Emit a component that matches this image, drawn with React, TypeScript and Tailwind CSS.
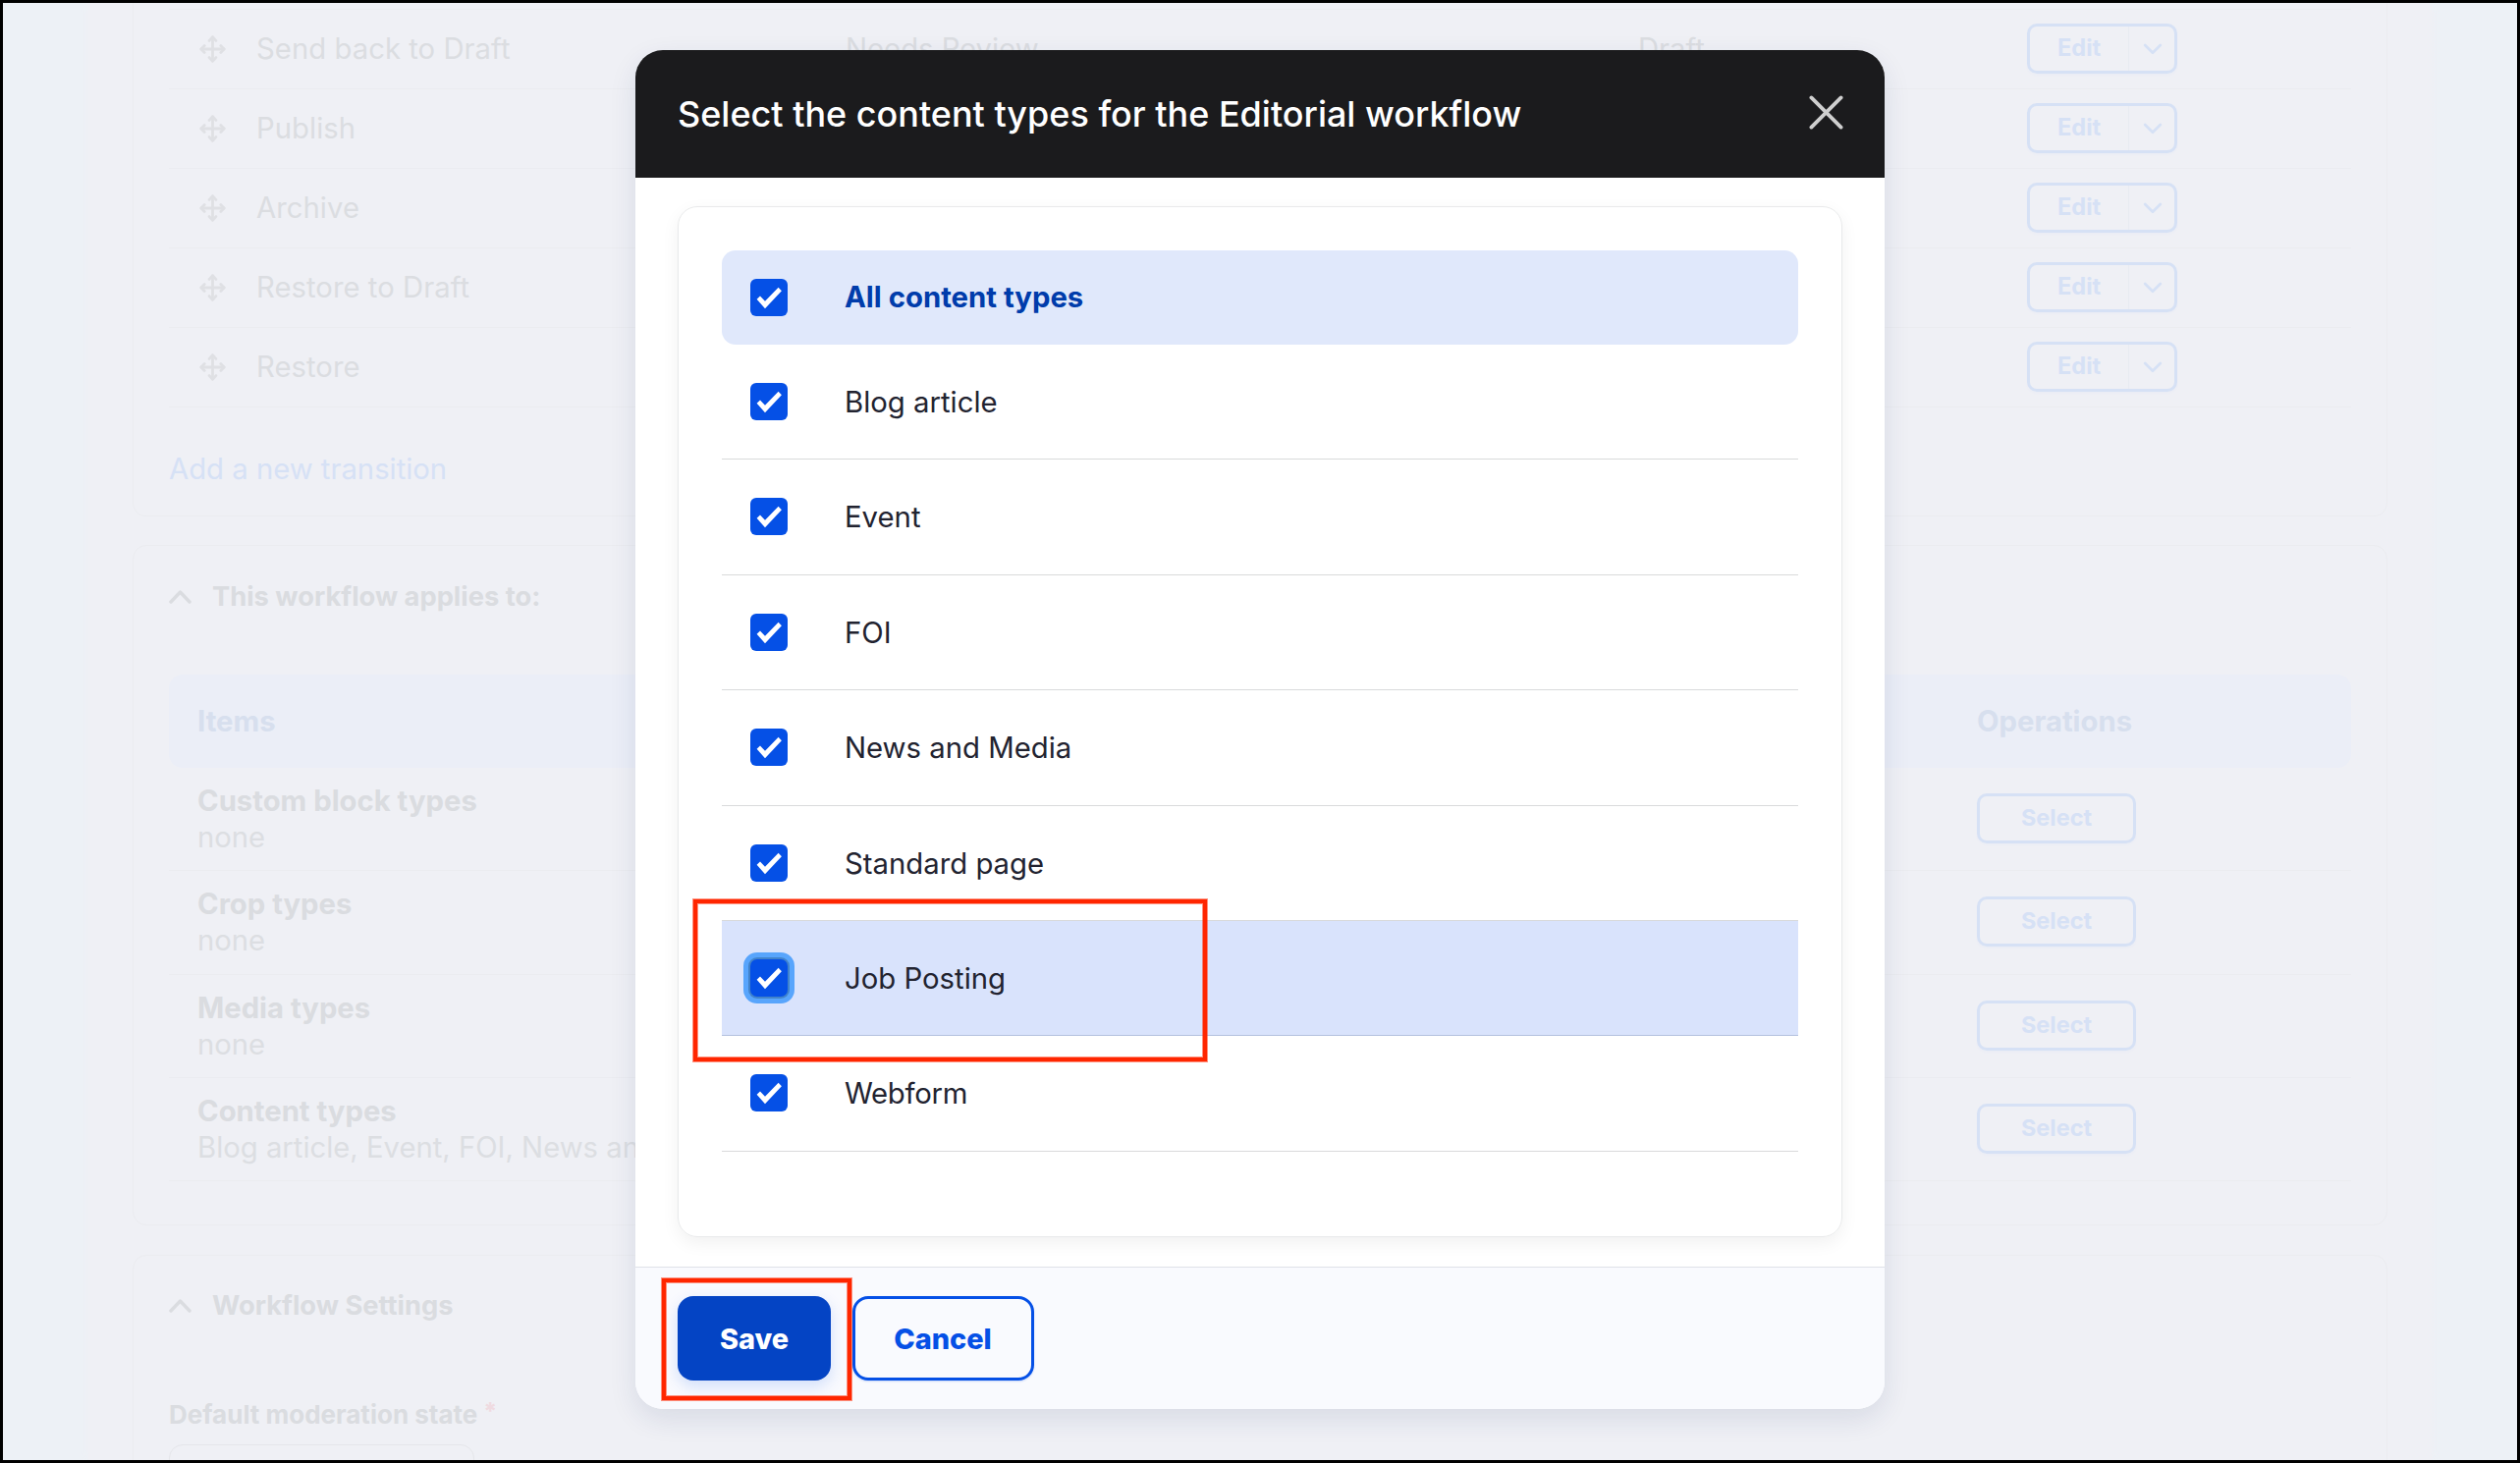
import type { ReactNode } from 'react';

const transitions = [
  { name: 'Send back to Draft', from: 'Needs Review', to: 'Draft' },
  { name: 'Publish', from: '', to: '' },
  { name: 'Archive', from: '', to: '' },
  { name: 'Restore to Draft', from: '', to: '' },
  { name: 'Restore', from: '', to: '' },
];

const items = [
  { title: 'Custom block types', value: 'none', height: 'h-[105px]' },
  { title: 'Crop types', value: 'none', height: 'h-[106px]' },
  { title: 'Media types', value: 'none', height: 'h-[105px]' },
  { title: 'Content types', value: 'Blog article, Event, FOI, News and Media', height: 'h-[105px]' },
];

const contentTypes = [
  { label: 'Blog article', height: 'h-[117px]' },
  { label: 'Event', height: 'h-[118px]' },
  { label: 'FOI', height: 'h-[117px]' },
  { label: 'News and Media', height: 'h-[118px]' },
  { label: 'Standard page', height: 'h-[117px]' },
  { label: 'Job Posting', height: 'h-[117px]', focused: true },
  { label: 'Webform', height: 'h-[118px]', tracking: 'tracking-[-0.3px]' },
];

function MoveIcon() {
  return (
    <svg className="h-[28px] w-[27px] shrink-0" viewBox="0 0 27 28" fill="none" stroke="#dfe0e4" strokeWidth="2.8" strokeLinecap="round" strokeLinejoin="round">
      <path d="M13.5 2v24M2 14h23" />
      <path d="M10.1 5.4l3.4-3.6 3.4 3.6M10.1 22.6l3.4 3.6 3.4-3.6" />
      <path d="M5.2 10.6L1.8 14l3.4 3.4M21.8 10.6l3.4 3.4-3.4 3.4" />
    </svg>
  );
}

function Heading({ children }: { children: ReactNode }) {
  return (
    <div className="flex h-[40px] items-center gap-[21px]">
      <svg className="h-[16px] w-[23px]" viewBox="0 0 23 16" fill="none" stroke="#dadce0" strokeWidth="3.4" strokeLinecap="round" strokeLinejoin="round">
        <path d="M2 13l9.5-10L21 13" />
      </svg>
      <h2 className="text-[27.3px] leading-[40px] font-bold text-[#dadce0]">{children}</h2>
    </div>
  );
}

function Check({ focused = false }: { focused?: boolean }) {
  return (
    <span
      className={
        focused
          ? 'block size-[38px] rounded-[7px] bg-[#0550e6] shadow-[0_0_0_2px_#4183cb,0_0_0_7px_#58a5fc]'
          : 'block size-[38px] rounded-[6px] bg-[#0550e6]'
      }
    >
      <svg viewBox="0 0 38 38" className="size-[38px]" fill="#fff">
        <path d="M6.6 20.8L10 17.4l5 5.4L28.6 8.8l3.3 3.5L15 30.2z" />
      </svg>
    </span>
  );
}

function Transitions() {
  return (
    <section className="h-[523px] rounded-b-[14px] border border-t-0 border-[#ebecf0] px-[36px]">
      <div className="h-[7px] border-b border-[#ebecf0]" />
      {transitions.map((t) => (
        <div key={t.name} className="grid h-[81px] grid-cols-[689px_807px_396px_1fr] border-b border-[#ebecf0] text-[29.25px] text-[#dbdde1]">
          <div className="flex items-center gap-[31px] pl-[31px]">
            <MoveIcon />
            <span className="leading-[40px] tracking-[0.04px]">{t.name}</span>
          </div>
          <div className="pt-[20px] leading-[40px]">{t.from}</div>
          <div className="pt-[20px] leading-[40px]">{t.to}</div>
          <div className="pt-[14px]">
            <div className="flex h-[51px] w-[153px] rounded-[10px] border-[3px] border-[#d6e1f5] shadow-[0_2px_3px_rgba(5,80,230,0.02)]">
              <span className="w-[101px] border-r border-[#e8ebf2] pl-[28px] text-[23.6px] leading-[43px] font-bold text-[#d6e1f5]">Edit</span>
              <svg className="mt-[16px] ml-[14px] h-[13px] w-[20px]" viewBox="0 0 20 13" fill="none" stroke="#d6e1f5" strokeWidth="2.8" strokeLinecap="round" strokeLinejoin="round">
                <path d="M2.2 3l7.8 7.8L17.8 3" />
              </svg>
            </div>
          </div>
        </div>
      ))}
      <a className="mt-[43px] block text-[29.25px] leading-[40px] text-[#d6e1f5]">Add a new transition</a>
    </section>
  );
}

function AppliesTo() {
  return (
    <section className="mt-[29px] h-[693px] rounded-[14px] border border-[#ebecf0] px-[36px] pt-[32px]">
      <Heading>This workflow applies to:</Heading>
      <div className="mt-[59px] flex h-[95px] items-center rounded-[14px] bg-[#ebeef7] pl-[29px] text-[29.25px] font-bold text-[#d7dfee]">
        <span className="w-[1812px]">Items</span>
        <span>Operations</span>
      </div>
      {items.map((i) => (
        <div key={i.title} className={`flex border-b border-[#ebecf0] pl-[29px] ${i.height}`}>
          <div className="w-[1812px] pt-[14.5px] text-[29.25px] leading-[37.4px]">
            <p className="font-bold text-[#dadce0]">{i.title}</p>
            <p className="text-[#dcdee2]">{i.value}</p>
          </div>
          <span className="mt-[26px] h-[51px] w-[162px] rounded-[10px] border-[3px] border-[#d6e1f5] text-center text-[23.5px] leading-[43px] font-bold text-[#d6e1f5] shadow-[0_2px_3px_rgba(5,80,230,0.02)]">
            Select
          </span>
        </div>
      ))}
    </section>
  );
}

function Settings() {
  return (
    <section className="mt-[30px] h-[400px] rounded-[14px] border border-[#ebecf0] px-[36px] pt-[31px]">
      <Heading>Workflow Settings</Heading>
      <div className="mt-[71px] flex gap-[6px] text-[26px] leading-[40px] font-bold text-[#dadce0]">
        <span>Default moderation state</span>
        <span className="-mt-[3px] text-[24px] font-extrabold text-[#efdbe1]">*</span>
      </div>
      <div className="mt-[10px] h-[80px] w-[311px] rounded-[14px] border border-[#e5e6ea]" />
    </section>
  );
}

function Dialog() {
  return (
    <div className="relative flex h-[1384px] w-[1272px] flex-col rounded-[28px] bg-white shadow-[0_10px_28px_rgba(30,50,100,0.11)]">
      <header className="flex h-[130px] items-center justify-between rounded-t-[28px] bg-[#1b1b1d] pr-[42px] pl-[43px]">
        <h1 className="text-[35.98px] leading-[48px] font-medium text-white">Select the content types for the Editorial workflow</h1>
        <svg className="-mt-[3px] size-[35px]" viewBox="0 0 35 35" stroke="#cfcfcf" strokeWidth="3.8" strokeLinecap="round">
          <path d="M2.4 2.4l30.2 30.2M32.6 2.4L2.4 32.6" />
        </svg>
      </header>
      <div className="flex-1 px-[43px] pt-[29px]">
        <div className="h-[1050px] rounded-[20px] border border-[#e9eaeb] px-[44px] pt-[44px] text-[29.3px] shadow-[0_6px_18px_rgba(0,0,0,0.06)]">
          <div className="flex h-[96px] items-center gap-[58px] rounded-[14px] bg-[#e0e8fb] pl-[29px] font-bold text-[#003cab]">
            <Check />
            <span>All content types</span>
          </div>
          {contentTypes.map((c) => (
            <div
              key={c.label}
              className={`flex gap-[58px] border-b pt-[39px] pl-[29px] leading-[40px] text-[#222330] ${c.height} ${c.focused ? 'border-[#b4c1de] bg-[#d9e3fc]' : 'border-[#d9dadb]'}`}
            >
              <Check focused={c.focused} />
              <span className={c.tracking}>{c.label}</span>
            </div>
          ))}
        </div>
      </div>
      <footer className="flex h-[145px] gap-[22px] rounded-b-[28px] border-t border-[#dfe2e8] bg-[#f9fafe] px-[43px] pt-[29px] text-[28.9px] font-extrabold">
        <button className="h-[86px] w-[156px] rounded-[16px] bg-[#0444c4] pt-[2px] text-white shadow-[0_6px_16px_rgba(5,80,230,0.16)]">Save</button>
        <button className="h-[86px] w-[185px] rounded-[16px] border-[3px] border-[#0550e6] pt-[2px] pr-[1px] text-[#0550e6] shadow-[0_1px_2px_rgba(5,80,230,0.2)]">Cancel</button>
      </footer>
      {/* Callout frames over the highlighted row and the save button */}
      <div className="absolute top-[865px] left-[59px] h-[165px] w-[523px] border-4 border-[#ff2600] shadow-[0_0_0_1px_rgba(255,38,0,0.5),inset_0_0_0_1px_rgba(255,38,0,0.5)]" />
      <div className="absolute top-[1251px] left-[27px] h-[124px] w-[193px] border-4 border-[#ff2600] shadow-[0_0_0_1px_rgba(255,38,0,0.5),inset_0_0_0_1px_rgba(255,38,0,0.5)]" />
    </div>
  );
}

export default function App() {
  return (
    <div className="relative h-[1490px] w-[2566px] overflow-hidden border-[3px] border-black bg-[#edf1f6] font-['Inter',sans-serif]">
      <div className="mx-[87px] h-[1484px] overflow-hidden bg-[#eff0f5] px-[45px] shadow-[0_0_10px_#eff0f5]">
        <Transitions />
        <AppliesTo />
        <Settings />
      </div>
      <div className="absolute inset-0 flex items-start justify-center pt-[48px]">
        <Dialog />
      </div>
    </div>
  );
}
